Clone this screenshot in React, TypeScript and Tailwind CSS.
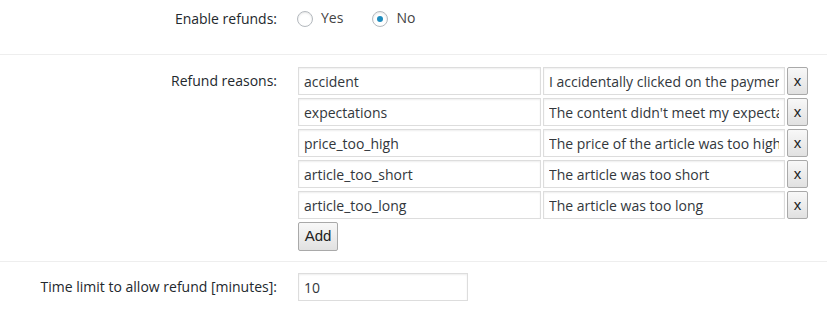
import React from "react";

const rows: [string, string][] = [
  ["accident", "I accidentally clicked on the payment button"],
  ["expectations", "The content didn't meet my expectations"],
  ["price_too_high", "The price of the article was too high"],
  ["article_too_short", "The article was too short"],
  ["article_too_long", "The article was too long"],
];

const inputCls =
  "h-[28px] border border-[#dddddd] bg-white px-[5px] text-[14px] text-[#32373c] shadow-[inset_0_1px_2px_rgba(0,0,0,0.07)] outline-none";

const btnCls =
  "h-[28px] rounded-[2px] border border-[#a9a9a9] bg-gradient-to-b from-[#f8f8f8] to-[#e1e1e1] text-[15px] text-[#222] [font-family:'Liberation_Sans',Arial,sans-serif]";

function Radio({ checked, label }: { checked?: boolean; label: string }) {
  return (
    <label className="inline-flex items-center">
      <span className="mt-[2px] flex h-[16px] w-[16px] items-center justify-center rounded-full border border-[#b4b9be] bg-white shadow-[inset_0_1px_2px_rgba(0,0,0,0.1)]">
        {checked && <span className="h-[6px] w-[6px] rounded-full bg-[#1e8cbe]" />}
      </span>
      <span className="ml-[8px] text-[14px] leading-[20px] text-[#444]">{label}</span>
    </label>
  );
}

export default function App() {
  return (
    <div className="h-[320px] w-[827px] bg-white [font-family:'Open_Sans',sans-serif] text-[14px]">
      <div className="flex h-[55px] items-start border-b border-[#eeeeee] pt-[8px]">
        <div className="w-[277px] shrink-0 pt-[1px] text-right leading-[20px] text-[#23282d]">Enable refunds:</div>
        <div className="ml-[20px] flex items-start gap-[29px]">
          <Radio label="Yes" />
          <Radio checked label="No" />
        </div>
      </div>

      <div className="flex border-b border-[#eeeeee] pt-[12px] pb-[10px]">
        <div className="w-[277px] shrink-0 text-right leading-[28px] text-[#23282d]">Refund reasons:</div>
        <div className="ml-[21px] flex flex-col gap-[3px]">
          {rows.map(([k, v]) => (
            <div key={k} className="flex gap-[2px]">
              <input className={`${inputCls} w-[243px]`} defaultValue={k} readOnly />
              <input className={`${inputCls} w-[242px]`} defaultValue={v} readOnly />
              <button className={`${btnCls} w-[21px]`}>x</button>
            </div>
          ))}
          <div>
            <button className={`${btnCls} h-[29px] w-[40px]`}>Add</button>
          </div>
        </div>
      </div>

      <div className="flex pt-[11px]">
        <div className="w-[277px] shrink-0 text-right leading-[28px] text-[#23282d]">
          Time limit to allow refund [minutes]:
        </div>
        <div className="ml-[21px]">
          <input className={`${inputCls} w-[170px]`} defaultValue="10" readOnly />
        </div>
      </div>
    </div>
  );
}
